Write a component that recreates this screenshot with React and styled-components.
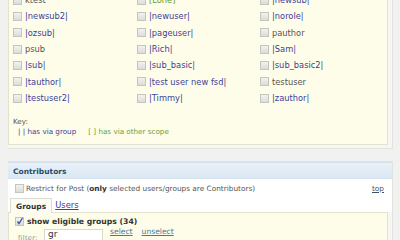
import React from "react";
import styled, { createGlobalStyle } from "styled-components";

const Global = createGlobalStyle`
  html, body {
    margin: 0;
    padding: 0;
    background: #f1f1ef;
  }
  body {
    width: 400px;
    height: 240px;
    overflow: hidden;
    font-family: "DejaVu Sans", Verdana, sans-serif;
    color: #555;
  }
`;

const Page = styled.div`
  margin-top: -12px;
  padding: 0 7px 0 8px;
`;

const Section = styled.div`
  border: 1px solid #e2e2de;
  border-left: none;
  background: #f6f6f4;
  padding-bottom: 3px;
  margin-bottom: ${p => p.mb || 0}px;
`;

const CreamPanel = styled.div`
  background: #fefde9;
  border: 1px solid #e3e2cc;
  margin-right: 4px;
  padding: ${p => p.pad || "2px 0 7px 4px"};
`;

const UserGrid = styled.div`
  display: grid;
  grid-template-columns: 124px 123px 1fr;
  grid-auto-rows: 16.33px;
`;

const Item = styled.div`
  display: flex;
  align-items: center;
  gap: 3px;
  font-size: 8.3px;
  color: ${p => (p.kind === "group" ? "#3d3d98" : p.kind === "scope" ? "#5f9a2c" : "#555")};
  white-space: nowrap;
`;

const Box = styled.span`
  width: 7px;
  height: 7px;
  flex: none;
  border: 1px solid #c4c4c0;
  background: linear-gradient(#f2f2f0, #dcdcd8);
  position: relative;
`;

const Tick = styled.svg`
  position: absolute;
  left: 0;
  top: -1px;
`;

const Check = ({ checked }) => (
  <Box>
    {checked && (
      <Tick width="8" height="8" viewBox="0 0 8 8">
        <path d="M1.5 4.5 L3 6.5 L6.5 1" fill="none" stroke="#3c4fa0" strokeWidth="1.3" />
      </Tick>
    )}
  </Box>
);

const KeyBlock = styled.div`
  margin-top: 11px;
  font-size: 7.2px;
  line-height: 10px;
`;

const KeyRow = styled.div`
  display: flex;
  gap: 12px;
  padding-left: 5px;
`;

const KeyText = styled.span`
  color: ${p => (p.green ? "#6aa03a" : "#3d3d98")};
`;

const Header = styled.div`
  height: 16px;
  display: flex;
  align-items: center;
  padding-left: 5px;
  background: linear-gradient(#e9f1f9, #d9e6f2);
  border-top: 1px solid #d5e2ee;
  font-size: 7.5px;
  font-weight: bold;
  color: #2e4b66;
`;

const Body = styled.div`
  background: #fff;
  padding-right: 8px;
`;

const RestrictRow = styled.div`
  height: 18px;
  display: flex;
  align-items: center;
  gap: 2px;
  padding-left: 7px;
  font-size: 7.35px;
  color: #555;
`;

const Bold = styled.b`
  color: #333;
`;

const Spacer = styled.span`
  flex: 1;
`;

const TopLink = styled.a`
  color: #3c5266;
  text-decoration: underline;
`;

const Tabs = styled.div`
  display: flex;
  align-items: flex-end;
  gap: 1px;
  padding-left: 2px;
  height: 15px;
`;

const Tab = styled.div`
  height: 14px;
  padding: ${p => (p.active ? "0 5px" : "0 2px")};
  display: flex;
  align-items: center;
  font-size: ${p => (p.active ? "7.5px" : "8.4px")};
  font-weight: ${p => (p.active ? "bold" : "normal")};
  color: ${p => (p.active ? "#333" : "#3d3d98")};
  text-decoration: ${p => (p.active ? "none" : "underline")};
  background: ${p => (p.active ? "#fcfcf4" : "transparent")};
  border: ${p => (p.active ? "1px solid #dcdcd0" : "none")};
  border-bottom: none;
  margin-bottom: ${p => (p.active ? "-1px" : "0")};
  position: relative;
`;

const ShowRow = styled.div`
  display: flex;
  align-items: center;
  gap: 3px;
  height: 12px;
  padding-left: 1px;
  font-size: 7.7px;
  font-weight: bold;
  color: #333;
`;

const FilterRow = styled.div`
  display: flex;
  align-items: flex-start;
  padding-left: 4px;
  margin-top: 2px;
`;

const FilterLabel = styled.span`
  font-size: 6.6px;
  color: #8a8a84;
  margin-top: 5px;
  width: 26px;
  letter-spacing: 0.3px;
`;

const Input = styled.div`
  width: 54px;
  height: 14px;
  background: #fff;
  border: 1px solid #d8d8d0;
  font-size: 9px;
  color: #333;
  padding-left: 3px;
  line-height: 9px;
`;

const Links = styled.div`
  display: flex;
  gap: 9px;
  margin-left: 7px;
  margin-top: -2px;
  font-size: 7.6px;
`;

const SmallLink = styled.a`
  color: #467a9a;
  text-decoration: underline;
`;

const users = [
  ["ktest", "user"], ["[Lone]", "scope"], ["|newsub|", "group"],
  ["|newsub2|", "group"], ["|newuser|", "group"], ["|norole|", "group"],
  ["|ozsub|", "group"], ["|pageuser|", "group"], ["pauthor", "user"],
  ["psub", "user"], ["|Rich|", "group"], ["|Sam|", "group"],
  ["|sub|", "group"], ["|sub_basic|", "group"], ["|sub_basic2|", "group"],
  ["|tauthor|", "group"], ["|test user new fsd|", "group"], ["testuser", "user"],
  ["|testuser2|", "group"], ["|Timmy|", "group"], ["|zauthor|", "group"],
];

export default function App() {
  return (
    <Page>
      <Global />
      <Section mb={12}>
        <CreamPanel>
          <UserGrid>
            {users.map(([name, kind], i) => (
              <Item key={i} kind={kind}>
                <Check />
                {name}
              </Item>
            ))}
          </UserGrid>
          <KeyBlock>
            <div>Key:</div>
            <KeyRow>
              <KeyText>| | has via group</KeyText>
              <KeyText green>[ ] has via other scope</KeyText>
            </KeyRow>
          </KeyBlock>
        </CreamPanel>
      </Section>
      <Section>
        <Header>Contributors</Header>
        <Body>
          <RestrictRow>
            <Check />
            <span>
              Restrict for Post (<Bold>only</Bold> selected users/groups are Contributors)
            </span>
            <Spacer />
            <TopLink>top</TopLink>
          </RestrictRow>
          <Tabs>
            <Tab active>Groups</Tab>
            <Tab>Users</Tab>
          </Tabs>
        </Body>
        <CreamPanel pad="2px 0 10px 5px">
          <ShowRow>
            <Check checked />
            show eligible groups (34)
          </ShowRow>
          <FilterRow>
            <FilterLabel>filter:</FilterLabel>
            <Input>gr</Input>
            <Links>
              <SmallLink>select</SmallLink>
              <SmallLink>unselect</SmallLink>
            </Links>
          </FilterRow>
        </CreamPanel>
      </Section>
    </Page>
  );
}
